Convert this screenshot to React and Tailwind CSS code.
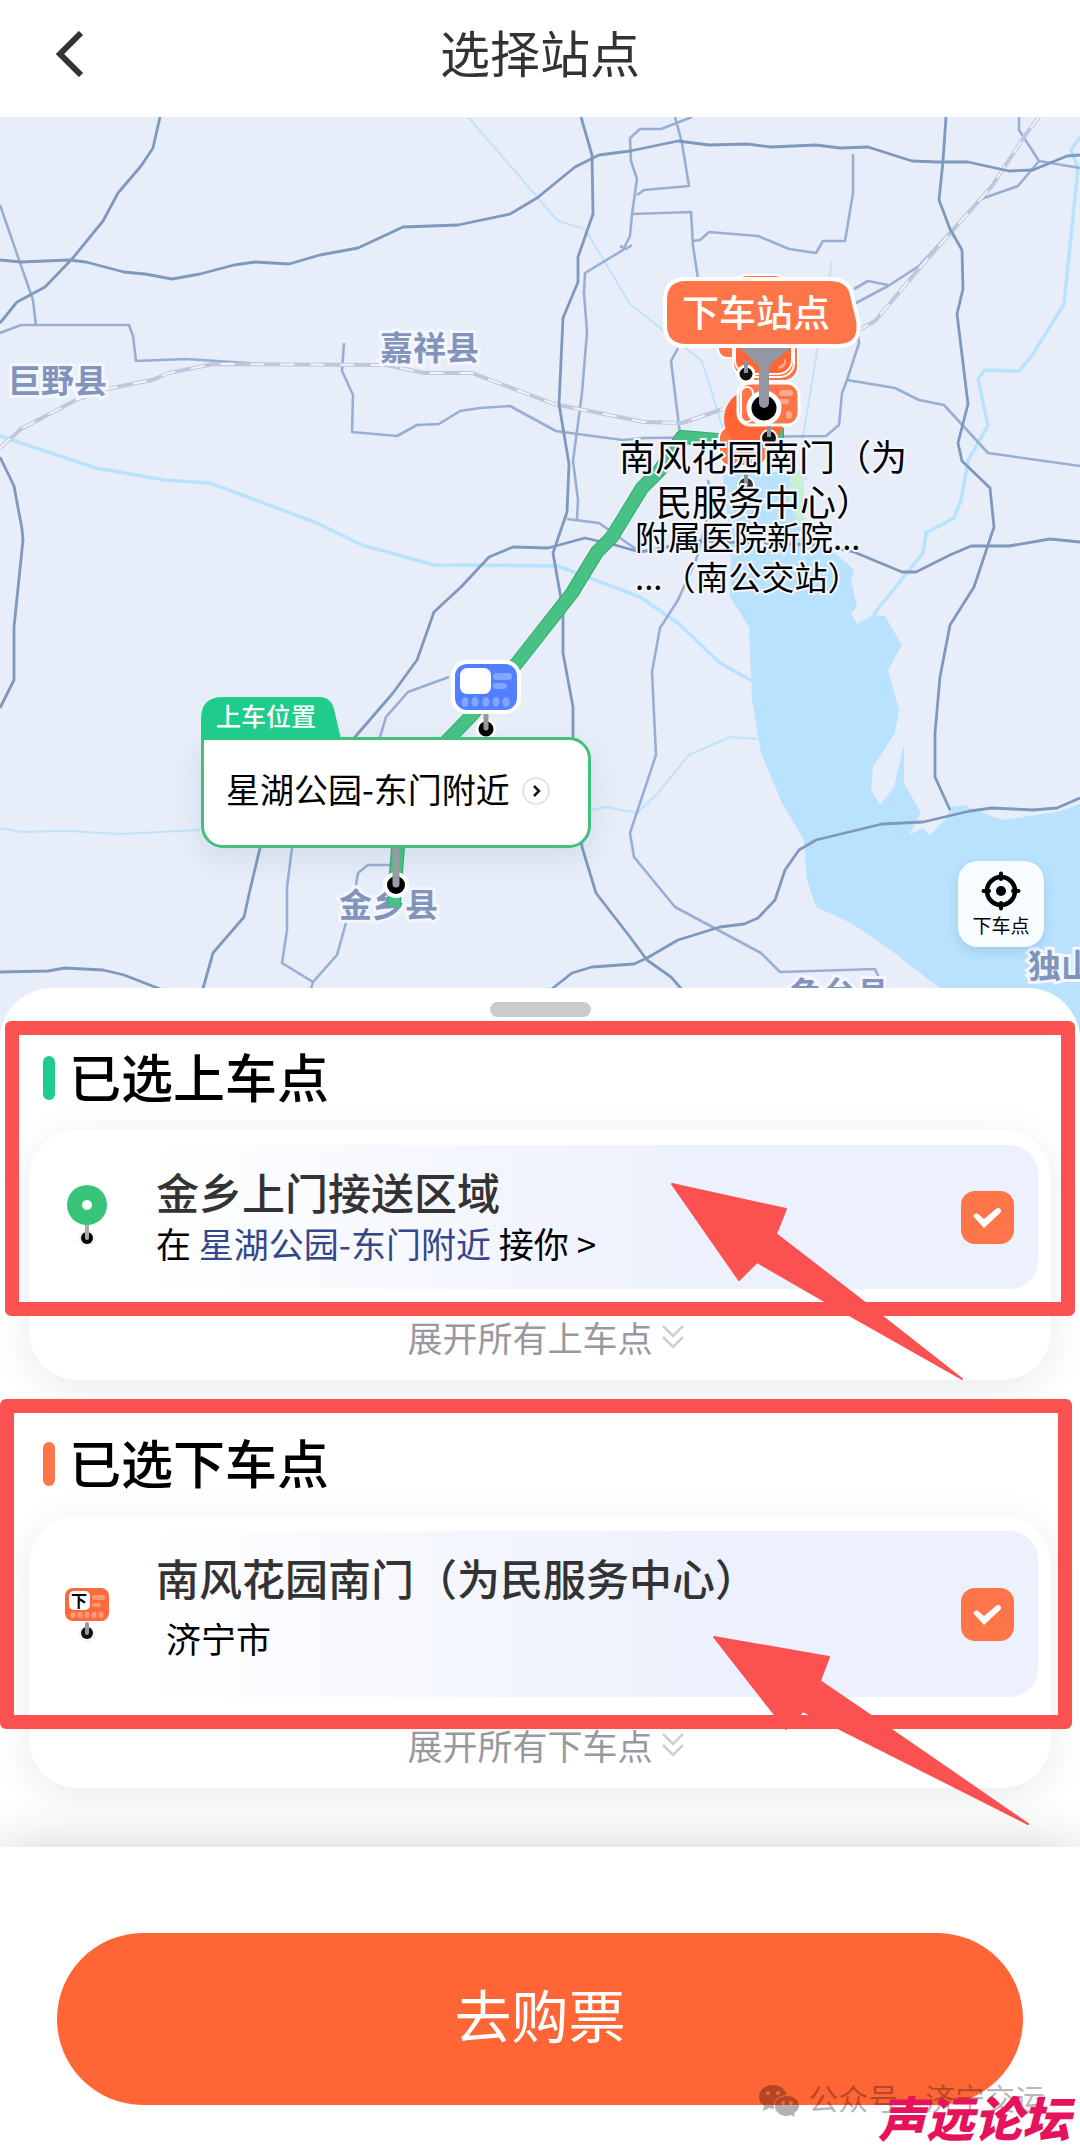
import React, { useState } from "react";

const highways = [
  "M160 117L153 148L141 166L118 193L103 221L72 259L45 287L17 302L0 323",
  "M0 260L21 262L69 260L86 262L124 272L145 274L172 279L200 274L234 265L255 262L289 264L320 255L358 248L403 227L458 225L510 214L537 198L575 167L599 155L630 151L678 141L709 145L747 144L771 147L816 145L840 148L868 147L912 161L937 162L968 162L1009 171L1033 170L1067 156L1080 155",
  "M946 117L943 161L939 200L950 229L962 250L963 289L957 314L968 404L958 443L962 461L990 488L994 527L974 587L950 625L940 677L935 733L935 777L950 810",
  "M581 117L592 155L593 214L578 257L578 282L563 318L559 404L569 464L567 512L553 553L563 610L563 653L573 707L573 740L582 847L596 893L630 937L647 960L671 977L684 992",
  "M1080 542L1050 539L1009 546L971 546L950 555L916 572L902 572L854 552L820 545L700 541L640 552L615 545L585 538L548 548L513 547L489 557L461 587L434 612L417 660L393 693L355 737L260 848L250 890L244 917L213 953L202 992",
  "M1080 798L1057 808L1033 810L992 808L970 811L923 822L882 824L816 840L799 850L785 870L775 900L758 918L744 924L720 927L678 940L647 958L634 964L592 967L572 973L548 992",
  "M0 972L48 971L65 968L103 970L124 975L168 992",
  "M0 457L14 486L22 529L23 540L14 627L14 680L0 708",
];

const roads = [
  "M0 205L33 300L36 326",
  "M0 333L21 325L129 325L133 336L136 361L186 359L262 364L348 365",
  "M344 343L342 371L353 395L352 432L397 436L417 425L439 424L460 411L480 408L510 406L556 431L585 435L623 440L644 438L826 436L839 425L842 393L847 380L859 343L856 320",
  "M1019 117L1019 130L1039 161L1018 186L981 199L919 266L888 286L854 304",
  "M1039 161L1080 168M888 285L868 281L854 289",
  "M692 117L661 129L640 129L630 138L631 161L637 179L632 214L630 236L623 250L585 273L584 293L587 332L582 393L573 461L578 500L577 519",
  "M620 246L626 249L632 245M567 519L599 523L640 552",
  "M675 117L682 143L689 186L644 190L637 195",
  "M632 214L691 212L693 246L698 279",
  "M692 241L700 240L709 232L758 236L789 249L816 253L823 241L845 241L853 193L853 154",
  "M678 348L671 361L680 434",
  "M847 380L895 388L919 400L944 405L988 453L1080 466",
  "M449 677L408 692L386 717L380 737M292 848L287 887L287 930L282 963L313 982",
  "M393 865L368 865L358 873L355 890L344 930L337 955L313 982L310 992",
  "M708 480L712 500L696 560L678 600L660 628L652 672L656 755L630 833L634 857L675 907L761 953L780 972L875 969L880 980",
];

const rails = [
  "M0 448L21 429L76 400L107 389L152 380L169 373L213 364L386 365L424 373L472 373L554 404L644 422L682 423L723 409",
  "M1039 117L1026 134L992 186L923 264L875 321L859 330",
];

const rivers = [
  "M0 436L48 452L96 468L165 480L210 483L317 523L362 545L434 565L558 566L640 597L678 623L720 663L752 681",
  "M1080 137L1071 150L1078 168L1064 304L1033 354L1019 371L985 370L978 379L988 425L968 461L961 500L954 518L926 533L923 553L873 615",
];

const streams = [
  "M468 117L558 221L585 229L630 304L702 361L723 429L730 475",
  "M832 261L802 443L806 480",
  "M0 828L21 832L69 831L120 834L200 830",
  "M591 810L606 807L637 813L658 793L689 755L730 737L758 739",
];

const counties = [
  { name: "嘉祥县", place: "left-[380px] top-[205px]" },
  { name: "巨野县", place: "left-[8px] top-[238px]" },
  { name: "鱼台县", place: "left-[790px] top-[851px]" },
  { name: "独山", place: "left-[1028px] top-[823px]" },
  { name: "金乡县", place: "left-[339px] top-[762px]" },
];

const route =
  "M777 428V440H717L682 437L660 470L642 488L612 537L597 552L572 593L517 663L470 717L440 748L404 800L398 848L395 885L394 907";

const MapDrawing = () => (
  <svg
    className="absolute inset-0 h-full w-full"
    viewBox="0 117 1080 923"
    preserveAspectRatio="xMinYMin slice"
    fill="none"
    strokeLinejoin="round"
    aria-hidden="true"
  >
    {/* Lake */}
    <path
      fill="#b9e2ff"
      d="M723 475L792 471L800 520L837 555L854 570L851 580L857 607L851 613L857 624L873 615L885 616L902 645L888 670L899 710L895 733L873 767L871 790L880 805L894 787L904 745L904 783L921 813L909 835L923 828L930 835L947 818L950 807L964 805L975 810L1002 820L1057 812L1080 804V1040H970L942 990L888 948L851 923L816 907L807 880L804 840L782 803L761 753L752 700L749 627L730 597L731 555Z"
    />
    <path fill="#c8efd3" d="M790 473L803 470L806 520L797 522L788 500Z" />
    {rivers.map((d) => (
      <path key={d} d={d} stroke="#b9e2ff" strokeWidth="3.5" />
    ))}
    {streams.map((d) => (
      <path key={d} d={d} stroke="#bfe3fd" strokeWidth="2" />
    ))}
    {roads.map((d) => (
      <path key={d} d={d} stroke="#98afd3" strokeWidth="2.6" />
    ))}
    {rails.map((d) => (
      <g key={d}>
        <path d={d} stroke="#bfc7dc" strokeWidth="4" />
        <path d={d} stroke="#f1f4fa" strokeWidth="2" strokeDasharray="14 16" />
      </g>
    ))}
    {highways.map((d) => (
      <path key={d} d={d} stroke="#7f98bd" strokeWidth="2.8" />
    ))}
  </svg>
);

const RouteDrawing = () => (
  <svg
    className="absolute inset-0 h-full w-full"
    viewBox="0 117 1080 923"
    preserveAspectRatio="xMinYMin slice"
    fill="none"
    aria-hidden="true"
  >
    <path d={route} stroke="#36a870" strokeWidth="14" strokeLinejoin="round" />
    <path d={route} stroke="#47c284" strokeWidth="12" strokeLinejoin="round" />

    {/* Stacked drop-off markers */}
    <g stroke="#fff" strokeWidth="2">
      <rect x="735" y="275" width="52" height="40" rx="12" fill="#ff754a" />
      <rect x="718" y="330" width="42" height="28" rx="9" fill="#ff754a" />
      <rect x="740" y="336" width="58" height="45" rx="14" fill="#ff754a" />
      <rect x="733" y="332" width="61" height="45" rx="14" fill="#ff754a" />
      <rect x="735" y="326" width="57" height="48" rx="14" fill="#ff6535" />
      <rect x="719" y="426" width="48" height="40" rx="12" fill="#ff754a" />
    </g>
    <circle cx="754" cy="419" r="30" fill="#ff6535" />
    <path d="M778 367l6-4v-4c4 0 3 10-6 10z" fill="#ffa78a" />
    <circle cx="746" cy="374" r="8" fill="#111" stroke="#fff" strokeWidth="3" />
    <path d="M746 360v13" stroke="#8f9299" strokeWidth="4" />
    <circle cx="764" cy="391" r="11" fill="#222" stroke="#fff" strokeWidth="2" />
    <rect x="738" y="383" width="61" height="42" rx="12" fill="#ff754a" stroke="#fff" strokeWidth="3" />
    <rect x="741" y="387" width="12" height="35" rx="6" stroke="#fff" strokeWidth="2" />
    <rect x="779" y="390" width="14" height="6" rx="3" fill="#ffa78a" />
    <rect x="777" y="399" width="12" height="5" rx="2" fill="#ffa78a" />
    <rect x="786" y="411" width="6" height="8" rx="3" fill="#ffa78a" />
    <circle cx="769" cy="438" r="8" fill="#111" stroke="#fff" strokeWidth="2" />
    <path d="M769 426v11" stroke="#8f9299" strokeWidth="4" />
    <circle cx="746" cy="485" r="8" fill="#333" stroke="#fff" strokeWidth="2" />
    <path d="M746 473v11" stroke="#8f9299" strokeWidth="4" />
    <path d="M740 348H790L769 366V400H759V366Z" fill="#9298a1" />
    <circle cx="764" cy="408" r="15" fill="#000" stroke="#fff" strokeWidth="5" />
    <path d="M764 358v45" stroke="#9298a1" strokeWidth="10" strokeLinecap="round" />

    {/* Drop-off callout */}
    <path
      d="M686 279H830Q846 279 851 291L858 320Q862 346 838 346H686Q665 346 665 325V300Q665 279 686 279Z"
      fill="#ff754a"
      stroke="#fff"
      strokeWidth="4"
    />

    {/* Bus on the route */}
    <circle cx="486" cy="729" r="9" fill="#000" stroke="#fff" strokeWidth="3" />
    <path d="M486 711v17" stroke="#999" strokeWidth="5" strokeLinecap="round" />
    <rect x="453" y="662" width="66" height="50" rx="14" fill="#5080ff" stroke="#fff" strokeWidth="4" />
    <rect x="460" y="668" width="31" height="26" rx="7" fill="#fff" />
    <rect x="493" y="673" width="19" height="7" rx="3.5" fill="#82a5ff" />
    <rect x="493" y="683" width="14" height="6" rx="3" fill="#82a5ff" />
    {[465, 475, 486, 496, 506].map((x) => (
      <ellipse key={x} cx={x} cy="702" rx="3.5" ry="5" fill="#82a5ff" />
    ))}

    {/* Pick-up pin */}
    <circle cx="396" cy="885" r="11" fill="#000" stroke="#fff" strokeWidth="4" />
    <path d="M396 848v36" stroke="#9b9fa5" strokeWidth="7" strokeLinecap="round" />
  </svg>
);

const PinIcon = () => (
  <svg width="60" height="64" viewBox="0 0 60 64" aria-hidden="true">
    <circle cx="30" cy="53" r="9" fill="#f3f3f3" />
    <circle cx="30" cy="53" r="6" fill="#000" />
    <path d="M30 38v15" stroke="#aaa" strokeWidth="4" strokeLinecap="round" />
    <circle cx="30" cy="20" r="20" fill="#38c478" />
    <circle cx="30" cy="20" r="5" fill="#fff" />
  </svg>
);

const BusIcon = () => (
  <span className="relative block">
    <svg width="60" height="64" viewBox="0 0 60 64" aria-hidden="true">
      <circle cx="30" cy="52" r="8" fill="#f3f3f3" />
      <circle cx="30" cy="51" r="6" fill="#111" />
      <path d="M30 42v9" stroke="#999" strokeWidth="4" strokeLinecap="round" />
      <rect x="8" y="6" width="44" height="33" rx="8" fill="#ff6a3c" />
      <rect x="12" y="9" width="21" height="19" rx="5" fill="#fff" />
      <rect x="35" y="13" width="13" height="5" rx="2" fill="#ff9a78" />
      <rect x="35" y="21" width="9" height="4" rx="2" fill="#ff9a78" />
      {[16, 23, 30, 37, 44].map((x) => (
        <ellipse key={x} cx={x} cy="33" rx="2.5" ry="3.2" fill="#ff9a78" />
      ))}
    </svg>
    <span className="absolute left-[14px] top-[10px] text-[16px] leading-[16px] font-bold text-black">
      下
    </span>
  </span>
);

const CheckBox = ({ label }) => {
  const [checked, setChecked] = useState(true);

  return (
    <label className="relative block h-[53px] w-[53px]">
      <input
        type="checkbox"
        aria-label={label}
        checked={checked}
        onChange={(e) => setChecked(e.target.checked)}
        className="block h-full w-full appearance-none rounded-[14px] border-2 border-[#ff754a] checked:bg-[#ff754a]"
      />
      {checked && (
        <svg className="pointer-events-none absolute inset-0" viewBox="0 0 53 53" aria-hidden="true">
          <path
            d="M12.500 25.500Q13 22 16.500 22.500L23 28L35.500 17.500Q39 16 40 19.500Q40 21 39 22L23 37Z"
            fill="#fff"
          />
        </svg>
      )}
    </label>
  );
};

const ExpandButton = ({ children }) => (
  <button className="mx-auto mt-7 mb-[22px] flex items-center gap-2 pl-3 text-[35px] leading-10 text-[#99989f]">
    {children}
    <svg width="24" height="26" viewBox="0 0 24 26" fill="none" stroke="#cfcfd3" strokeWidth="2.5" aria-hidden="true">
      <path d="M2 2L12 12L22 2M2 13L12 23L22 13" />
    </svg>
  </button>
);

const StopSection = ({ title, bar, expand, children }) => (
  <>
    <h2 className="mb-5 flex items-center gap-[14px] pl-[43px] text-[52px] leading-[60px] font-medium text-black">
      <span className={`h-11 w-3 rounded-full ${bar}`}></span>
      <span className="pb-1">{title}</span>
    </h2>
    <div className="mx-[29px] rounded-[48px] bg-white px-[13px] pt-[15px] pb-px shadow-[0_8px_36px_rgba(70,90,110,0.13)]">
      {children}
      <ExpandButton>{expand}</ExpandButton>
    </div>
  </>
);

const App = () => {
  return (
    <div className="relative flex min-h-screen flex-col overflow-hidden bg-white font-['Noto_Sans_CJK_SC',sans-serif] text-black">
      {/* Header */}
      <header className="relative flex h-[117px] items-center justify-center pb-4">
        <button aria-label="返回" className="absolute left-12 top-[27px] p-1">
          <svg width="36" height="46" viewBox="0 0 36 46" fill="none" stroke="#333" strokeWidth="6" aria-hidden="true">
            <path d="M29 2L8 23L29 44" />
          </svg>
        </button>
        <h1 className="text-[50px] leading-[60px] text-[#333]">选择站点</h1>
      </header>

      {/* Map */}
      <div className="relative h-[923px] overflow-hidden bg-[#e7eef9]">
        <MapDrawing />
        {counties.map((county) => (
          <span
            key={county.name}
            className={`absolute text-[33px] leading-[48px] font-bold whitespace-nowrap text-[#8294bb] [-webkit-text-stroke:6px_#f3f7fd] [paint-order:stroke_fill] ${county.place}`}
          >
            {county.name}
          </span>
        ))}
        <RouteDrawing />

        <span className="absolute left-[682px] top-[170px] text-[37px] leading-[48px] font-medium whitespace-nowrap text-white">
          下车站点
        </span>
        <div className="absolute left-[619px] top-[316px] text-[36px] leading-[45px] whitespace-nowrap [-webkit-text-stroke:4px_#f3f7fd] [paint-order:stroke_fill]">
          <p>南风花园南门（为</p>
          <p className="pl-[37px]">民服务中心）</p>
        </div>
        <div className="absolute left-[635px] top-[399px] text-[33px] leading-[40px] whitespace-nowrap [-webkit-text-stroke:4px_#f3f7fd] [paint-order:stroke_fill]">
          <p>附属医院新院...</p>
          <p>...（南公交站）</p>
        </div>

        {/* Pick-up callout */}
        <div className="absolute left-[201px] top-[580px]">
          <div className="relative h-10 w-[140px]">
            <svg className="absolute inset-0" width="140" height="42" viewBox="0 0 140 42" aria-hidden="true">
              <path d="M0 42V22Q0 0 22 0H118Q130 0 133 12L140 42Z" fill="#1fcc8c" />
            </svg>
            <span className="relative block pl-[15px] text-[25px] leading-9 font-medium text-white">上车位置</span>
          </div>
          <button className="flex h-[111px] w-[390px] items-center rounded-[22px] rounded-tl-none border-[3px] border-[#41c07e] bg-white pl-[22px] pb-2 text-[34px] leading-[50px] shadow-[0_10px_30px_rgba(60,80,120,0.12)]">
            星湖公园-东门附近
            <svg className="ml-3 mt-1" width="28" height="28" viewBox="0 0 28 28" fill="none" aria-hidden="true">
              <circle cx="14" cy="14" r="13" stroke="#ddd" strokeWidth="1.5" />
              <path d="M12 9L17 14L12 19" stroke="#111" strokeWidth="2.5" />
            </svg>
          </button>
        </div>

        <button className="absolute right-9 top-[744px] flex h-[86px] w-[86px] flex-col items-center rounded-[20px] bg-[#f7fcff] pt-[10px] text-[19px] leading-7 shadow-[0_4px_12px_rgba(60,110,160,0.2)]">
          <svg width="40" height="40" viewBox="0 0 40 40" aria-hidden="true">
            <circle cx="20" cy="20" r="14" fill="none" stroke="#000" strokeWidth="4.5" />
            <circle cx="20" cy="20" r="5" />
            <path
              d="M20 2.500V8M20 32V37.500M2.500 20H8M32 20H37.500"
              stroke="#000"
              strokeWidth="4"
              strokeLinecap="round"
            />
          </svg>
          下车点
        </button>
      </div>

      {/* Bottom sheet */}
      <main className="relative -mt-[52px] flex-1 rounded-t-[52px] bg-white pt-[14px] pb-[59px]">
        <div className="mx-auto h-[15px] w-[101px] rounded-full bg-[#cbcacf]"></div>

        <section className="relative mt-[29px]">
          <StopSection title="已选上车点" bar="bg-[#20cc8c]" expand="展开所有上车点">
            <div className="flex items-center rounded-[28px] bg-linear-to-r from-white from-10% to-[#edf1fd] to-65% pr-6">
              <div className="mr-6 flex w-[90px] justify-center">
                <PinIcon />
              </div>
              <div className="flex-1 pt-[21px] pb-6">
                <h3 className="text-[43px] leading-[50px] font-medium text-[#333]">金乡上门接送区域</h3>
                <p className="mt-[5px] text-[35px] leading-[44px]">
                  在{" "}
                  <a href="#pickup" className="text-[#34478c]">
                    星湖公园-东门附近
                  </a>{" "}
                  接你 &gt;
                </p>
              </div>
              <CheckBox label="金乡上门接送区域" />
            </div>
          </StopSection>
          <div className="pointer-events-none absolute inset-x-[5px] -top-[25px] h-[295px] rounded-[6px] border-[14px] border-[#fb5251]"></div>
          <svg
            className="pointer-events-none absolute right-[116px] top-[137px]"
            width="294"
            height="198"
            viewBox="670 1183 294 198"
            aria-hidden="true"
          >
            <path
              d="M672 1184L786 1209L776 1234L864 1302L962 1379L826 1302L757 1262L739 1280Z"
              fill="#fb5251"
              stroke="#fb5251"
              strokeWidth="2"
              strokeLinejoin="round"
            />
          </svg>
        </section>

        <section className="relative mt-[52px]">
          <StopSection title="已选下车点" bar="bg-[#ff754a]" expand="展开所有下车点">
            <div className="flex items-center rounded-[28px] bg-linear-to-r from-white from-10% to-[#edf1fd] to-65% pr-6">
              <div className="mr-6 flex w-[90px] justify-center">
                <BusIcon />
              </div>
              <div className="flex-1 pt-[21px] pb-[37px]">
                <h3 className="text-[43px] leading-[50px] font-medium text-[#333]">南风花园南门（为民服务中心）</h3>
                <p className="mt-[14px] pl-[10px] text-[35px] leading-[44px]">济宁市</p>
              </div>
              <CheckBox label="南风花园南门（为民服务中心）" />
            </div>
          </StopSection>
          <div className="pointer-events-none absolute left-0 right-2 -top-[33px] h-[330px] rounded-[6px] border-[14px] border-[#fb5251]"></div>
          <svg
            className="pointer-events-none absolute right-[51px] top-[204px]"
            width="316"
            height="191"
            viewBox="713 1636 316 191"
            aria-hidden="true"
          >
            <path
              d="M714 1637L829 1657L820 1681L870 1715L1028 1824L842 1730L803 1711L786 1729Z"
              fill="#fb5251"
              stroke="#fb5251"
              strokeWidth="2"
              strokeLinejoin="round"
            />
          </svg>
        </section>
      </main>

      {/* Footer */}
      <footer className="relative bg-white px-[57px] pt-[86px] pb-[43px] shadow-[0_0_48px_rgba(0,0,0,0.18)]">
        <button className="h-[172px] w-full rounded-full bg-[#ff6535] pb-3 text-[57px] leading-[80px] text-white">
          去购票
        </button>
        <div className="absolute right-[35px] bottom-[24px] flex items-center gap-2 text-[30px] leading-10 whitespace-nowrap text-black/30">
          <svg width="42" height="34" viewBox="0 0 42 34" fill="currentColor" fillRule="evenodd" aria-hidden="true">
            <path d="M15 1C7 1 1 6 1 13c0 4 2 7 5 9l-1 5 6-3 5 1C15 16 21 11 29 11 27 5 22 1 15 1ZM10 7a2 2 0 1 1 0 4 2 2 0 0 1 0-4Zm10 0a2 2 0 1 1 0 4 2 2 0 0 1 0-4Z" />
            <path d="M29 12c-7 0-12 4-12 10s5 10 12 10l4-1 4 2-1-4c3-2 5-4 5-7 0-6-5-10-12-10Zm-4 5a2 2 0 1 1 0 4 2 2 0 0 1 0-4Zm8 0a2 2 0 1 1 0 4 2 2 0 0 1 0-4Z" />
          </svg>
          <span className="pb-1">
            公众号<span className="font-['Liberation_Sans',sans-serif]"> · </span>济宁交运
          </span>
        </div>
        <span className="absolute right-[10px] bottom-0 text-[48px] leading-[64px] font-black whitespace-nowrap italic text-[#e5125c]">
          声远论坛
        </span>
      </footer>
    </div>
  );
};

export default App;
